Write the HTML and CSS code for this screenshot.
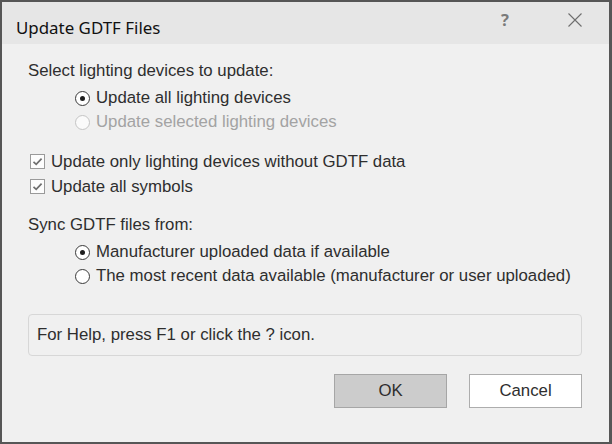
FILE: index.html
```html
<!DOCTYPE html>
<html>
<head>
<meta charset="utf-8">
<link rel="stylesheet" href="styles.css">
</head>
<body>
<div class="window">
  <div class="titlebar">
    <div class="title">Update GDTF Files</div>
    <span class="help-glyph">?</span>
    <svg class="close" width="14" height="14" viewBox="0 0 14 14"><path d="M0.5 0.5 L13.5 13.5 M13.5 0.5 L0.5 13.5" stroke="#6e6e6e" stroke-width="1.1" fill="none"/></svg>
  </div>
  <div class="content">
    <div class="label">Select lighting devices to update:</div>
    <div class="options">
      <div class="opt"><span class="radio checked"></span><span>Update all lighting devices</span></div>
      <div class="opt disabled"><span class="radio"></span><span>Update selected lighting devices</span></div>
    </div>
    <div class="checks">
      <div class="chk"><span class="box"><svg width="13" height="13" viewBox="0 0 13 13"><path d="M2.5 6.8 L5.2 9.3 L10.6 3.6" stroke="#6f6f6f" stroke-width="1.7" fill="none"/></svg></span><span>Update only lighting devices without GDTF data</span></div>
      <div class="chk"><span class="box"><svg width="13" height="13" viewBox="0 0 13 13"><path d="M2.5 6.8 L5.2 9.3 L10.6 3.6" stroke="#6f6f6f" stroke-width="1.7" fill="none"/></svg></span><span>Update all symbols</span></div>
    </div>
    <div class="label sync">Sync GDTF files from:</div>
    <div class="options">
      <div class="opt"><span class="radio checked"></span><span>Manufacturer uploaded data if available</span></div>
      <div class="opt"><span class="radio"></span><span>The most recent data available (manufacturer or user uploaded)</span></div>
    </div>
    <div class="helpbox">For Help, press F1 or click the ? icon.</div>
    <div class="buttons">
      <button class="btn ok">OK</button>
      <button class="btn">Cancel</button>
    </div>
  </div>
</div>
</body>
</html>
```
FILE: styles.css
```css
* { box-sizing: border-box; }
html, body { margin: 0; padding: 0; background: #f0f0f0; }
.window {
  width: 612px;
  height: 444px;
  border: 2px solid #565656;
  border-right-width: 3px;
  background: #f0f0f0;
  display: flex;
  flex-direction: column;
  font-family: "Liberation Sans", Arial, sans-serif;
  font-size: 16.8px;
  color: #2e2e2e;
}
.titlebar {
  height: 42px;
  flex: none;
  background: #e6e6e6;
  display: flex;
  align-items: flex-start;
  padding: 0 27px 0 14px;
}
.title {
  flex: 1;
  font-family: "Noto Sans", sans-serif;
  font-size: 16.9px;
  line-height: 20px;
  padding-top: 16px;
  color: #111;
}
.help-glyph {
  width: 16px;
  margin-top: 8px;
  text-align: center;
  font-family: "Noto Sans", sans-serif;
  font-weight: bold;
  font-size: 16.5px;
  line-height: 20px;
  color: #7a7a7a;
}
.close {
  margin-top: 11px;
  margin-left: 55px;
  display: block;
}
.content {
  flex: 1;
  padding: 15px 0 0 26px;
  display: flex;
  flex-direction: column;
  line-height: 24px;
}
.options {
  margin-left: 47px;
  margin-top: 3px;
  display: flex;
  flex-direction: column;
}
.opt, .chk {
  display: flex;
  align-items: center;
  gap: 6px;
  height: 24px;
  white-space: nowrap;
}
.opt.disabled { color: #a3a3a3; }
.radio {
  width: 15px;
  height: 15px;
  border: 1px solid #3a3a3a;
  border-radius: 50%;
  background: #fff;
  display: flex;
  align-items: center;
  justify-content: center;
  flex: none;
}
.radio.checked::after {
  content: "";
  width: 5px;
  height: 5px;
  border-radius: 50%;
  background: #1e1e1e;
}
.opt.disabled .radio { border-color: #c4c4c4; background: #fafafa; }
.checks {
  margin-top: 15px;
  margin-left: 2px;
  display: flex;
  flex-direction: column;
}
.chk { height: 25px; }
.box {
  width: 15px;
  height: 15px;
  border: 1px solid #9a9a9a;
  background: #fdfdfd;
  display: flex;
  align-items: center;
  justify-content: center;
  flex: none;
}
.box svg { display: block; }
.sync { margin-top: 14px; }
.helpbox {
  margin-top: 26px;
  width: 554px;
  height: 42px;
  border: 1px solid #d7d7d7;
  border-radius: 4px;
  padding-left: 8px;
  display: flex;
  align-items: center;
}
.buttons {
  width: 554px;
  margin-top: 18px;
  display: flex;
  justify-content: flex-end;
  gap: 22px;
}
.btn {
  width: 113px;
  height: 34px;
  border: 1px solid #adadad;
  background: #fff;
  font-family: "Liberation Sans", Arial, sans-serif;
  font-size: 16.8px;
  color: #2e2e2e;
  padding: 0;
  margin: 0;
}
.btn.ok { background: #cccccc; border-color: #a6a6a6; }
```
